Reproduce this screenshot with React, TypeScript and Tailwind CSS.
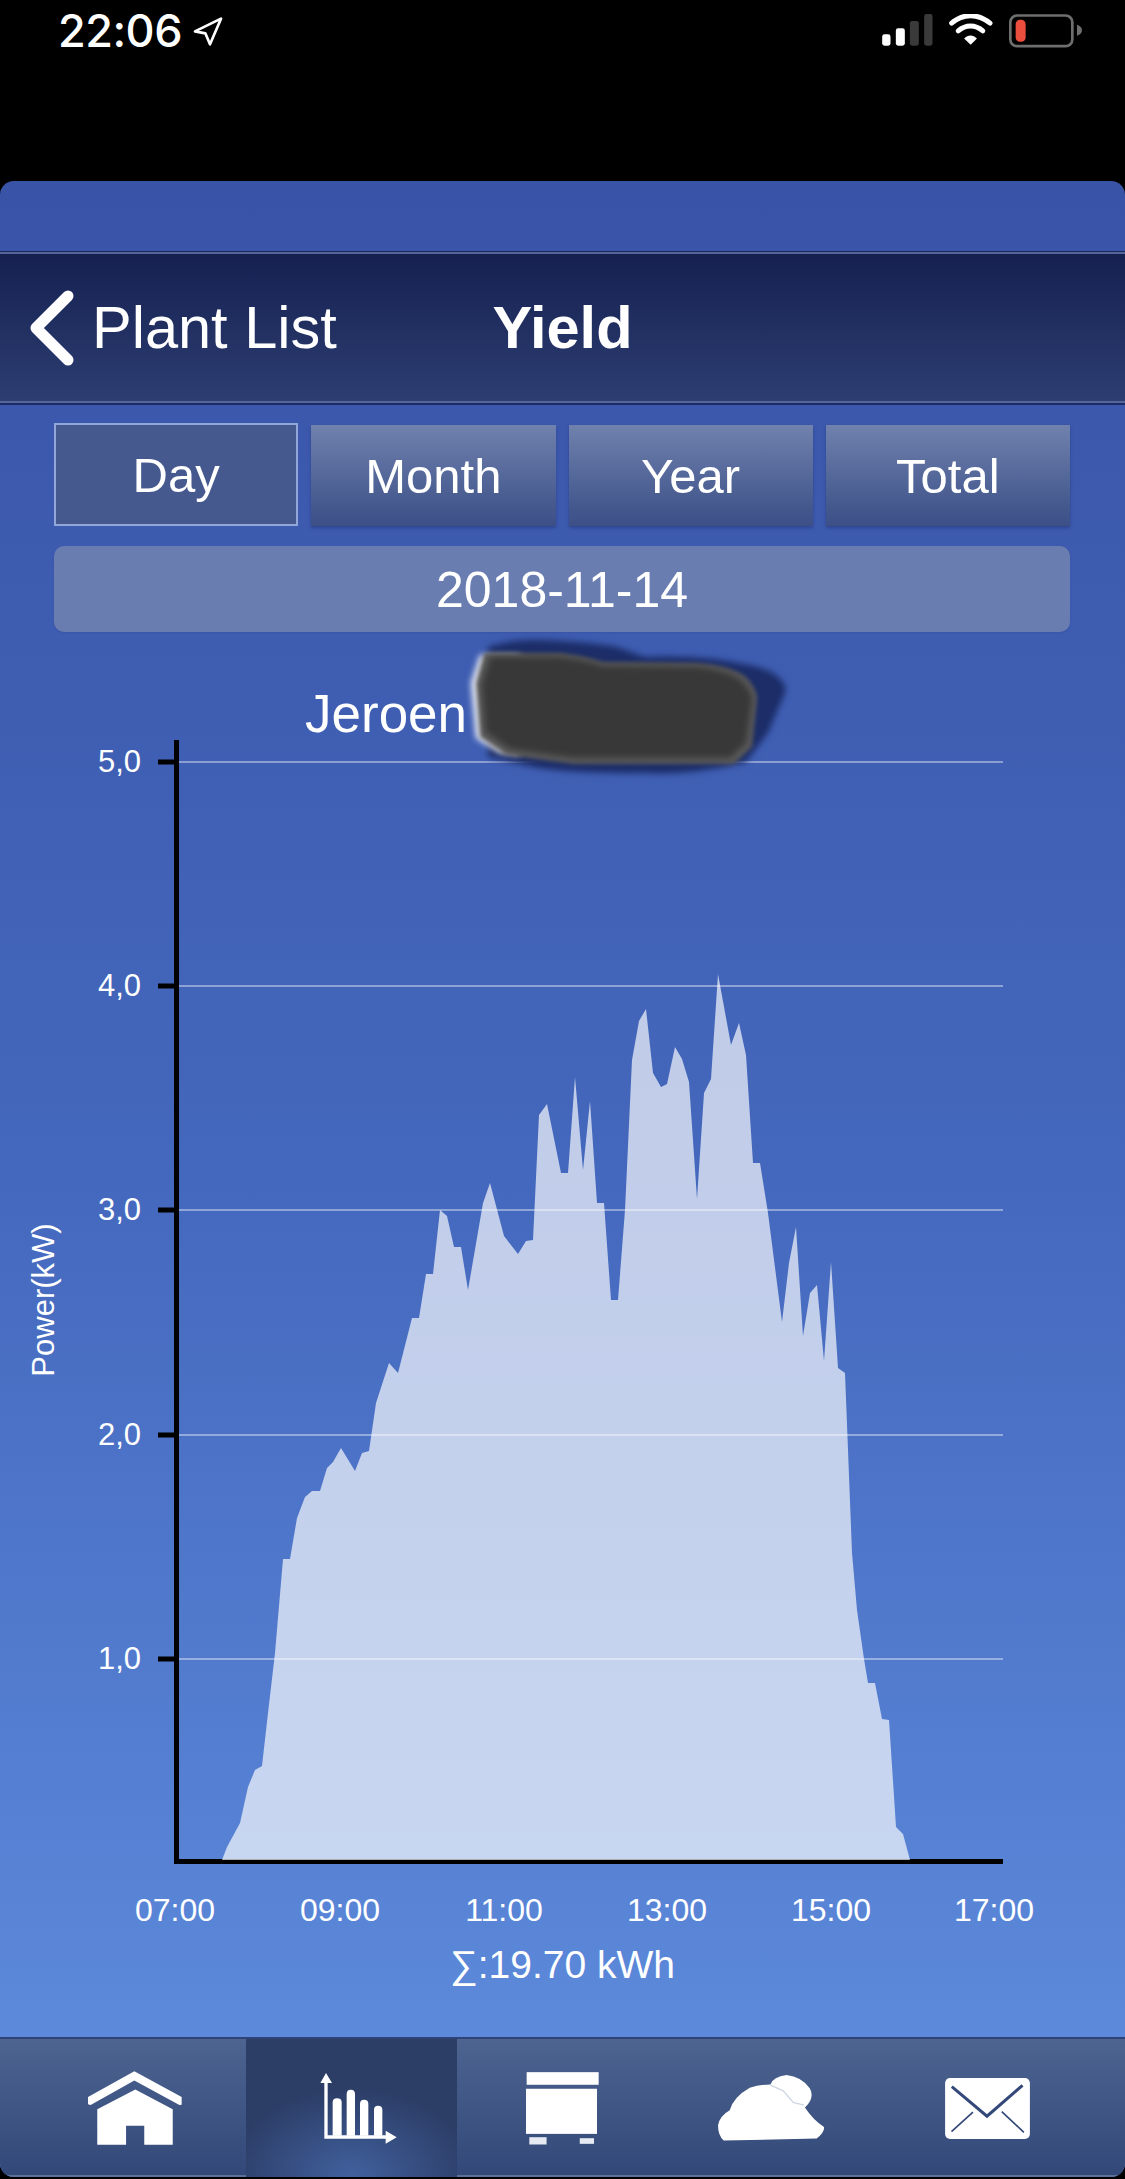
import React from 'react';

// outline of the yield curve, in page pixels
const CURVE =
  '222,1860 227,1847 240,1823 248,1787 255,1770 262,1766 268,1713 275,1653 283,1559 290,1559 297,1518 305,1497 312,1491 320,1491 327,1468 333,1462 341,1448 355,1471 362,1453 369,1451 376,1403 389,1363 398,1373 412,1318 419,1318 426,1274 433,1274 440,1210 447,1216 454,1247 461,1247 468,1290 483,1203 490,1183 504,1236 518,1254 526,1241 533,1240 539,1115 547,1104 561,1173 568,1173 575,1077 583,1170 590,1101 597,1203 604,1203 611,1300 618,1300 625,1210 632,1060 639,1021 646,1009 653,1073 661,1087 667,1084 675,1047 682,1059 689,1082 697,1199 704,1093 711,1079 718,974 731,1045 739,1023 746,1055 753,1163 760,1163 768,1213 782,1322 789,1263 796,1227 803,1336 810,1293 817,1285 824,1361 831,1262 838,1368 845,1373 848,1450 852,1553 857,1610 864,1659 868,1683 875,1683 882,1719 889,1720 896,1827 903,1834 910,1860';

const Y_TICKS = [
  { y: 762, label: '5,0' },
  { y: 986, label: '4,0' },
  { y: 1210, label: '3,0' },
  { y: 1435, label: '2,0' },
  { y: 1659, label: '1,0' },
];

const X_TICKS = [
  { x: 175, label: '07:00' },
  { x: 340, label: '09:00' },
  { x: 504, label: '11:00' },
  { x: 667, label: '13:00' },
  { x: 831, label: '15:00' },
  { x: 994, label: '17:00' },
];

const StatusBar = () => (
  <div className="flex h-[181px] items-start justify-between pl-[58px] pr-[43px] pt-[14px] text-white">
    <div className="flex items-center gap-[11px]">
      <span className="font-['Inter',sans-serif] text-[45px] font-medium leading-[34px] tracking-[-0.5px]">22:06</span>
      <svg width="30" height="29" viewBox="460 45 90 87">
        <path d="M466 88 L544 50 L511 127 L497 94 Z" fill="none" stroke="white" strokeWidth="8" strokeLinejoin="round" />
      </svg>
    </div>
    <div className="flex items-start gap-[16px]">
      <svg width="51" height="32" viewBox="37 42 152 96">
        <rect x="37" y="103" width="25" height="34" rx="7" fill="white" />
        <rect x="78" y="85" width="27" height="52" rx="7" fill="white" />
        <rect x="120" y="63" width="27" height="74" rx="7" fill="#3a3a3a" />
        <rect x="163" y="42" width="25" height="95" rx="7" fill="#3a3a3a" />
      </svg>
      <svg width="44" height="31" viewBox="237 45 134 93">
        <path d="M245 72 C280 42 325 42 362 72" fill="none" stroke="white" strokeWidth="15" strokeLinecap="round" />
        <path d="M265 96 C288 76 317 76 340 96" fill="none" stroke="white" strokeWidth="15" strokeLinecap="round" />
        <path d="M283 119 C295 107 310 107 322 119 L303 138 Z" fill="white" />
      </svg>
      <svg width="73" height="34" viewBox="418 40 219 101">
        <rect x="422" y="44" width="186" height="92" rx="20" fill="none" stroke="#6e6e6e" strokeWidth="8" />
        <rect x="438" y="57" width="30" height="66" rx="13" fill="#eb4e3d" />
        <path d="M622 72 Q637 78 637 88 Q637 99 622 105 Z" fill="#6e6e6e" />
      </svg>
    </div>
  </div>
);

const NavBar = () => (
  <div className="grid h-[154px] grid-cols-[1fr_auto_1fr] items-center border-t-[1px] border-b-[2px] border-t-[#1b2757] border-b-[#1d2c66] bg-gradient-to-b from-[#152050] to-[#2e3e72] text-[59.5px] text-white shadow-[inset_0_2px_0_#56659a,inset_0_-2px_0_#56659a]">
    <div className="flex items-center gap-[16px] pl-[28px]">
      <svg width="48" height="76" viewBox="0 0 48 76">
        <path d="M40 6 L8 38 L40 70" fill="none" stroke="white" strokeWidth="11" strokeLinecap="round" strokeLinejoin="round" />
      </svg>
      <span>Plant List</span>
    </div>
    <span className="font-bold">Yield</span>
    <div />
  </div>
);

const PeriodButton = ({ label, active }: { label: string; active?: boolean }) => (
  <div
    className={
      active
        ? 'flex h-[103px] items-center justify-center border-2 border-[#93a6da] bg-[#46598f] pt-[3px]'
        : 'mt-[2px] flex h-[101px] items-center justify-center bg-gradient-to-b from-[#7081ad] to-[#3c4f87] pt-[3px] shadow-[0_2px_3px_#2f4690]'
    }
  >
    {label}
  </div>
);

const Blob = () => (
  <svg className="absolute left-[460px] top-0" width="340" height="150" viewBox="460 632 340 150">
    <path
      className="blur-[3px]"
      d="M488 647 Q515 638 545 640 Q590 642 617 647 L645 657 Q700 655 739 663 Q770 668 778 677 Q788 685 785 693 L768 733 L746 762 Q690 776 645 773 Q580 774 538 768 L488 757 Z"
      fill="#1c2d68"
    />
    <path className="blur-[3px]" d="M480 655 L520 655 L520 755 L500 753 L476 738 L471 683 Z" fill="#f2f4fa" />
    <path
      className="blur-[2px]"
      d="M484 653 L560 653 Q585 656 603 662 L696 663 Q730 665 746 677 Q758 690 757 700 L752 747 L734 764 L574 764 L506 755 L480 737 L476 683 Z"
      fill="#5a5a5a"
    />
    <path
      className="blur-[3px]"
      d="M490 657 L560 657 Q585 660 603 666 L696 667 Q726 669 742 681 Q752 692 752 700 L746 743 L730 758 L574 758 L510 749 L486 732 L482 685 Z"
      fill="#383838"
    />
  </svg>
);

const Chart = () => (
  <svg width="1125" height="1195" viewBox="0 740 1125 1195" className="block">
    <rect x="174" y="740" width="5" height="1124" fill="black" />
    <rect x="174" y="1859" width="829" height="5" fill="black" />
    {Y_TICKS.map((t) => (
      <g key={t.y}>
        <rect x="158" y={t.y - 2.5} width="16" height="5" fill="black" />
        <text x="141" y={t.y + 10} textAnchor="end" className="fill-white text-[31px]">
          {t.label}
        </text>
      </g>
    ))}
    <polygon points={CURVE} fill="white" fillOpacity="0.67" />
    {Y_TICKS.map((t) => (
      <rect key={t.y} x="179" y={t.y - 1} width="824" height="2" fill="white" fillOpacity="0.4" />
    ))}
    <text transform="translate(54 1300) rotate(-90)" textAnchor="middle" className="fill-white text-[31px]">
      Power(kW)
    </text>
    {X_TICKS.map((t) => (
      <text key={t.x} x={t.x} y="1921" textAnchor="middle" className="fill-white text-[32px]">
        {t.label}
      </text>
    ))}
  </svg>
);

const TABS = [
  {
    key: 'home',
    icon: (
      <svg className="mr-[11px]" width="94" height="74" viewBox="82 90 284 222">
        <path d="M222 90 L365 168 L365 191 L358 192 L222 118 L90 192 L82 190 L82 168 Z" fill="white" />
        <path d="M225 145 L338 205 L338 312 L252 312 L252 255 L197 255 L197 312 L110 312 L110 205 Z" fill="white" />
      </svg>
    ),
  },
  {
    key: 'chart',
    active: true,
    icon: (
      <svg className="ml-[14px]" width="77" height="71" viewBox="780 82 231 213">
        <path d="M798 82 L816 112 L803 112 L803 269 L977 269 L977 255 L1010 275 L977 294 L977 279 L793 279 L793 112 L781 112 Z" fill="white" />
        <path d="M818 270 L818 170 Q818 158 831 158 Q845 158 845 170 L845 270 Z" fill="white" />
        <path d="M860 270 L860 145 Q860 132 872 132 Q885 132 885 145 L885 270 Z" fill="white" />
        <path d="M900 270 L900 174 Q900 162 912 162 Q925 162 925 174 L925 270 Z" fill="white" />
        <path d="M942 270 L942 192 Q942 180 954 180 Q967 180 967 192 L967 270 Z" fill="white" />
      </svg>
    ),
  },
  {
    key: 'box',
    icon: (
      <svg width="73" height="73" viewBox="76 92 220 219">
        <rect x="78" y="92" width="217" height="38" fill="white" />
        <rect x="76" y="142" width="214" height="136" fill="white" />
        <rect x="86" y="288" width="52" height="22" fill="#e6eaf2" />
        <rect x="238" y="291" width="43" height="17" fill="#e6eaf2" />
      </svg>
    ),
  },
  {
    key: 'cloud',
    icon: (
      <svg className="mr-[4px]" width="107" height="66" viewBox="655 100 320 197">
        <path
          d="M672 296 Q655 280 655 250 Q660 222 690 205 Q702 165 750 138 Q780 128 812 128 Q820 105 860 100 Q905 105 930 140 Q945 170 915 197 Q940 235 972 255 Q975 270 950 290 L672 296 Z"
          fill="white"
        />
        <path d="M812 130 L850 147 L880 182 L912 190" fill="none" stroke="#cfd6e4" strokeWidth="4" />
      </svg>
    ),
  },
  {
    key: 'mail',
    icon: (
      <svg className="ml-[6px]" width="85" height="61" viewBox="497 110 253 182">
        <rect x="497" y="110" width="253" height="182" rx="15" fill="white" />
        <path d="M517 136 L622 224 L728 132" fill="none" stroke="#34487a" strokeWidth="9" />
        <path d="M516 270 L580 212 M666 210 L732 272" fill="none" stroke="#34487a" strokeWidth="5" />
      </svg>
    ),
  },
];

const TabBar = () => (
  <div className="flex h-[140px] border-t-[2px] border-[#2f4378] bg-gradient-to-b from-[#4d6390] to-[#324878] px-[35px] shadow-[inset_0_-2px_0_#5e7299]">
    {TABS.map((tab) => (
      <div
        key={tab.key}
        className={
          tab.active
            ? 'flex w-[211px] items-center justify-center bg-[radial-gradient(ellipse_60%_65%_at_50%_100%,#41619e,#2c3d66)]'
            : 'flex w-[211px] items-center justify-center'
        }
      >
        {tab.icon}
      </div>
    ))}
  </div>
);

export default function App() {
  return (
    <div className="h-[2179px] w-[1125px] overflow-hidden bg-black font-['Liberation_Sans',sans-serif]">
      <StatusBar />
      <div className="flex h-[1996px] flex-col overflow-hidden rounded-t-[14px] rounded-b-[14px] bg-gradient-to-b from-[#3953a7] via-[#4468bd] to-[#618fe0]">
        <div className="h-[70px] shrink-0" />
        <NavBar />

        {/* Period tabs and date */}
        <div className="pl-[54px] pr-[55px] pt-[18px] text-[49px] text-white">
          <div className="grid grid-cols-4 gap-[13px]">
            <PeriodButton label="Day" active />
            <PeriodButton label="Month" />
            <PeriodButton label="Year" />
            <PeriodButton label="Total" />
          </div>
          <div className="mt-[20px] flex h-[86px] items-center justify-center rounded-[10px] bg-[#6a7db0] pt-[3px] text-[50px] shadow-[0_1px_2px_#3a55a8]">
            2018-11-14
          </div>
        </div>

        {/* Chart */}
        <div className="relative flex-1 text-white">
          <div className="h-[108px] pl-[305px] pt-[52px] text-[53px] leading-[60px]">Jeroen</div>
          <Blob />
          <Chart />
          <div className="pt-[7px] text-center text-[39px] leading-[46px]">∑:19.70 kWh</div>
        </div>

        <TabBar />
      </div>
    </div>
  );
}
